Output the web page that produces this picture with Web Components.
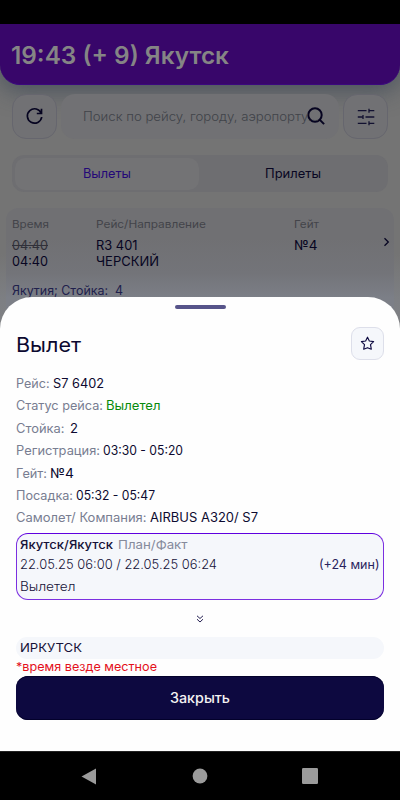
<!DOCTYPE html>
<html lang="ru"><head><meta charset="utf-8"><title>Вылет</title>
<style>html,body{margin:0;background:#000}body{font-family:Inter,"Noto Sans",sans-serif;width:400px;height:800px;overflow:hidden}</style></head>
<body><flight-app></flight-app>
<script>
const define=(name,markup,after)=>{
  const t=document.createElement('template');t.innerHTML=markup;
  customElements.define(name,class extends HTMLElement{
    connectedCallback(){
      if(this.shadowRoot)return;
      this.attachShadow({mode:'open'}).append(t.content.cloneNode(true));
      if(after)after(this);
    }
  });
};
// Text run stretched horizontally so that it fills the width in its "w" attribute.
define('fit-text','<style>:host{display:inline-block;white-space:pre;flex:none}span{display:inline-block;transform-origin:0 50%}:host([struck]) span{text-decoration:line-through}</style><span><slot></slot></span>',el=>{
  const w=+el.getAttribute('w'),s=el.shadowRoot.querySelector('span');
  s.style.transform='scaleX('+(w/s.getBoundingClientRect().width).toFixed(4)+')';
  el.style.width=w+'px';
});
define('icon-button',`<style>:host{display:flex;box-sizing:border-box;width:45px;height:45px;border:1px solid #66666e;border-radius:14px;background:#717174;align-items:center;justify-content:center;flex:none;color:#060420}
:host([light]){width:33px;height:33px;border-radius:9px;background:#f5f7fb;border-color:#dddfea;color:#0d0940}</style><slot></slot>`);
define('info-row',`<style>:host{display:flex;height:22.42px;line-height:22.42px;font-size:12.6px;color:#0d0a30;align-items:center;gap:3px;padding-left:.3px}
::slotted(:first-child){color:#787d91}::slotted([ok]){color:#078a0b}</style><slot></slot>`);
define('app-header',`<style>:host{display:flex;box-sizing:border-box;height:61px;padding:3px 11px 0;align-items:center;background:#38066a;border-radius:0 0 20px 20px;border-bottom:1px solid #3b087e;color:#858585;font-size:24px;font-weight:600;box-shadow:0 5px 25px rgba(48,62,78,.65);position:relative}</style><slot></slot>`);
define('search-bar',`<style>:host{display:flex;height:45px;padding:0 12px;gap:4px;margin-top:9px;position:relative}
.box{flex:1;min-width:0;display:flex;align-items:center;box-sizing:border-box;background:#717174;border-radius:14px;padding:0 10px 1px 22px;color:#404349;font-size:12.8px;font-weight:300}
.box svg{margin-left:-12px;flex:none}svg{display:block}</style>
<icon-button><svg width="19" height="19" viewBox="0 0 19 19" fill="none" stroke="currentColor" stroke-width="1.7"><path d="M16.3 6.4A7.2 7.2 0 1 0 16.7 10M16.5 1.8V6.5H11.8"/></svg></icon-button>
<div class="box"><fit-text w="236">Поиск по рейсу, городу, аэропорту...</fit-text><svg width="18" height="18" viewBox="0 0 18 18" fill="none" stroke="#060420" stroke-width="2"><circle cx="8" cy="8" r="6.7"/><path d="M12.6 12.6l4.5 4.5"/></svg></div>
<icon-button><svg width="18" height="18" viewBox="0 0 18 18" fill="none" stroke="#121130" stroke-width="1.3"><path d="M.8 2.7H9.5M12 .7V4.7M12 2.7H17.3M.8 9H6M6 7V11M8.5 9H17.3M.8 15.3H9.5M12 13.3V17.3M12 15.3H17.3"/></svg></icon-button>`);
define('tab-bar',`<style>:host{display:grid;grid-template-columns:1fr 1fr;margin:16px 12px 0;height:37px;border-radius:12px;background:#6e6e71;padding:2.5px;box-sizing:border-box;font-size:12.6px;position:relative}
div{display:flex;align-items:center;justify-content:center;border-radius:10px;color:#080622;padding-bottom:1px}.on{background:#737375;color:#230878;margin-right:1.5px}</style>
<div class="on"><fit-text w="48">Вылеты</fit-text></div><div><fit-text w="56">Прилеты</fit-text></div>`);
define('flight-card',`<style>:host{display:grid;grid-template-columns:83.5px 198px 1fr;grid-template-rows:17px 24px 9px 44px;margin:16px 6px 0;padding:8px 0 0 6.2px;box-sizing:border-box;height:200px;border-radius:12px;background:linear-gradient(#707073 30px,#737479 65px,#7c7f87 90px);font-size:13px;line-height:17px;color:#070522;position:relative}
.h{font-size:10.8px;color:#43444a;line-height:17px}.old{color:#303039}
.r{line-height:25px}.n{line-height:24px;margin-top:-8px}.g{display:flex;justify-content:space-between;padding-right:4px}.g svg{margin-top:3.5px}.air{grid-column:1/-1;line-height:49px;font-size:12.8px;color:#20204c}</style>
<div class="h"><fit-text w="37">Время</fit-text></div><div class="h"><fit-text w="110">Рейс/Направление</fit-text></div><div class="h"><fit-text w="25">Гейт</fit-text></div>
<div class="r"><fit-text struck class="old" w="36">04:40</fit-text></div><div class="r"><fit-text w="41.5">R3 401</fit-text></div><div class="r g"><fit-text w="23.5">№4</fit-text><svg width="7" height="10" viewBox="0 0 7 10" fill="none" stroke="currentColor" stroke-width="1.3"><path d="M1.5 1.3 5.3 5 1.5 8.7"/></svg></div>
<div class="n"><fit-text w="36">04:40</fit-text></div><div class="n"><fit-text w="63">ЧЕРСКИЙ</fit-text></div><div></div>
<div class="air"><fit-text w="111">Якутия; Стойка:  4</fit-text></div>`);
define('route-card',`<style>:host{display:block;box-sizing:border-box;height:67px;border:1px solid #7b2fe0;border-top-color:#5f00df;border-radius:12px;background:#f5f7fb;padding:1px 3.2px 0;color:#151238;font-size:13px;font-weight:300;margin-top:3px;flex:none}
div{display:flex;align-items:center;height:19.5px}.head{font-size:12.2px;gap:4.5px;font-weight:500}.head :last-child{color:#858a9b;font-weight:400}.t{justify-content:space-between}.late{font-size:12.6px;font-weight:400;color:#29245e}.s{height:25px;font-size:12.6px}</style>
<div class="head"><fit-text w="93">Якутск/Якутск</fit-text><fit-text w="69.5">План/Факт</fit-text></div>
<div class="t"><fit-text w="197">22.05.25 06:00 / 22.05.25 06:24</fit-text><fit-text class="late" w="60.5">(+24 мин)</fit-text></div>
<div class="s"><fit-text w="55.5">Вылетел</fit-text></div>`);
define('bottom-sheet',`<style>:host{display:flex;flex-direction:column;position:absolute;left:0;top:297px;width:400px;height:454px;box-sizing:border-box;padding:8px 16px 0;background:#fefefe;border-radius:32px 32px 0 0}
.grip{width:51px;height:4px;border-radius:2px;background:#57548a;align-self:center}
.title{display:flex;justify-content:space-between;align-items:center;height:33px;margin:18px 0 13px;font-size:20px;color:#0c0930}.title fit-text{padding-top:2px}
svg{display:block}.more{align-self:center;margin-top:15px}.city{height:22px;border-radius:11px;background:#f5f7fb;padding-left:4.2px;display:flex;align-items:center;font-size:12.3px;color:#151238;margin-top:14px;flex:none}
.note{height:17px;line-height:16.5px;color:#e4101b;font-size:11.8px}
button{font:500 14px Inter,"Noto Sans",sans-serif;border:0;border-radius:12px;height:44.5px;padding:0 1px 1px 0;background:#0d0940;color:#f4f2f2;box-shadow:inset 0 1px #03012b,inset 0 -1px #03012b;display:flex;align-items:center;justify-content:center}</style>
<div class="grip"></div>
<div class="title"><fit-text w="65">Вылет</fit-text><icon-button light><svg width="15" height="15" viewBox="0 0 15 15" fill="none" stroke="#0d0940" stroke-width="1.15" stroke-linejoin="round"><path d="M7.5 1.2 9.35 5.05 13.6 5.65 10.5 8.65 11.3 13.2 7.5 11.7 3.7 13.2 4.5 8.65 1.4 5.65 5.65 5.05Z"/></svg></icon-button></div>
<info-row><fit-text w="33.5">Рейс:</fit-text><fit-text w="51">S7 6402</fit-text></info-row>
<info-row><fit-text w="87">Статус рейса:</fit-text><fit-text ok w="54.5">Вылетел</fit-text></info-row>
<info-row style="gap:5.5px"><fit-text w="48.5">Стойка:</fit-text><fit-text w="8">2</fit-text></info-row>
<info-row><fit-text w="84">Регистрация:</fit-text><fit-text w="80">03:30 - 05:20</fit-text></info-row>
<info-row><fit-text w="31">Гейт:</fit-text><fit-text w="24">№4</fit-text></info-row>
<info-row><fit-text w="57">Посадка:</fit-text><fit-text w="79">05:32 - 05:47</fit-text></info-row>
<info-row><fit-text w="130.5">Самолет/ Компания:</fit-text><fit-text w="108">AIRBUS A320/ S7</fit-text></info-row>
<route-card></route-card>
<svg class="more" width="8" height="8" viewBox="0 0 8 8" fill="none" stroke="#252052" stroke-width="1"><path d="M1 .8 4 3.5 7 .8M1 4.2 4 7 7 4.2"/></svg>
<div class="city"><fit-text w="62">ИРКУТСК</fit-text></div>
<div class="note"><fit-text w="141">*время везде местное</fit-text></div>
<button><fit-text w="60">Закрыть</fit-text></button>`);
define('nav-bar',`<style>:host{display:flex;position:absolute;left:0;bottom:0;width:400px;height:49px;box-sizing:border-box;padding:0 82px 0 81px;background:#000;justify-content:space-between;align-items:center;border-top:1px solid #222}svg{display:block}</style>
<svg width="16" height="17" fill="#9b9b9b"><path d="M15 .5V16.5L.5 8.5Z"/></svg><svg width="16" height="16" fill="#9b9b9b"><circle cx="8" cy="8" r="7.4"/></svg><svg width="16" height="16" fill="#9b9b9b"><rect width="16" height="16" rx="1.2"/></svg>`);
define('flight-app',`<style>:host{display:block;position:relative;width:400px;height:800px;overflow:hidden;background:#747474}
.status{height:24px;background:#000;position:relative;z-index:1}.bg{height:776px;background:linear-gradient(#747474 230px,#7d7f83 275px,#808184 310px)}</style>
<div class="status"></div><div class="bg"><app-header><fit-text w="218">19:43 (+ 9) Якутск</fit-text></app-header><search-bar></search-bar><tab-bar></tab-bar><flight-card></flight-card></div>
<bottom-sheet></bottom-sheet><nav-bar></nav-bar>`);
</script></body></html>
